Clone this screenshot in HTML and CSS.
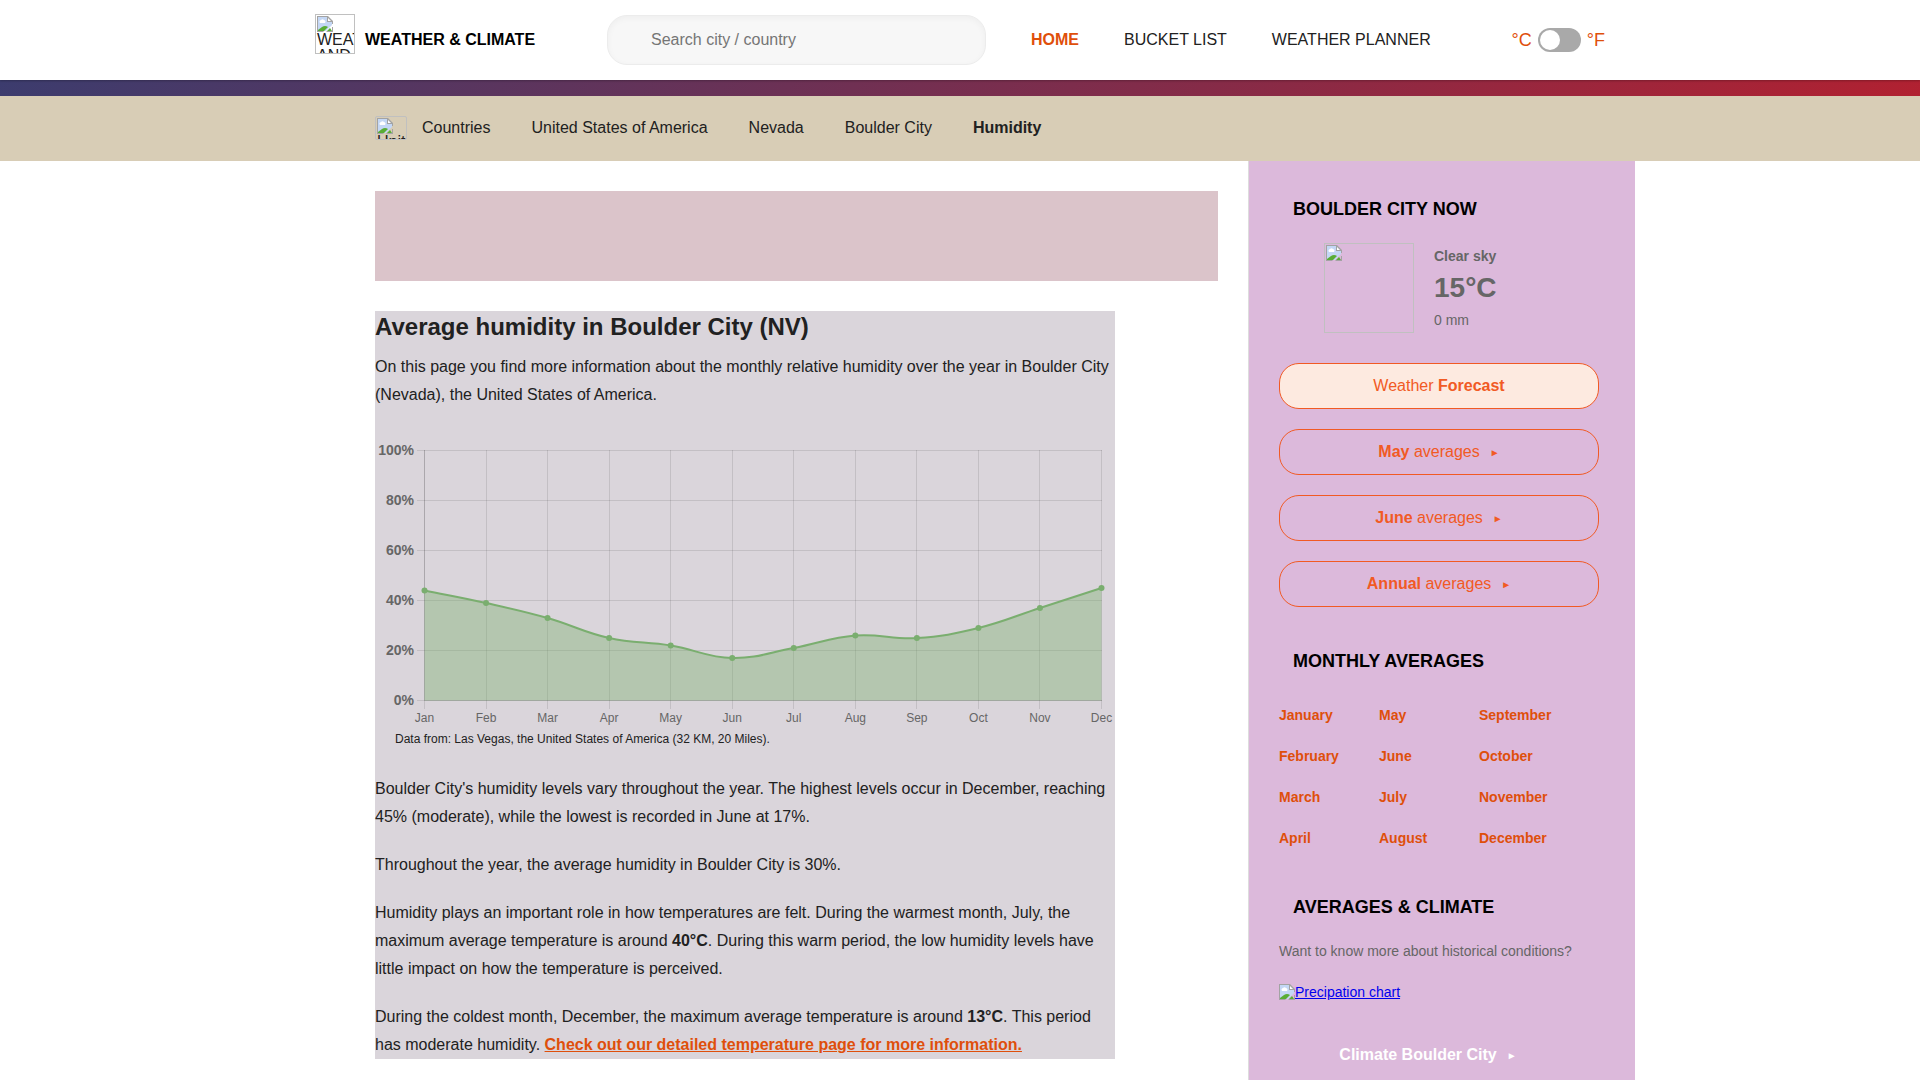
FILE: index.html
```html
<!DOCTYPE html>
<html lang="en">
<head>
<meta charset="utf-8">
<title>Average humidity in Boulder City (NV)</title>
<link rel="stylesheet" href="styles.css">
</head>
<body>
<svg class="defs" aria-hidden="true">
  <symbol id="missing" viewBox="0 0 16 16">
    <path fill="#c4d7f5" d="M1 1h9l5 5v3l-6 6H1z"/>
    <path fill="#fff" d="M3 7a2 2 0 0 1 1-3 2 2 0 0 1 3 0 2 2 0 0 1 1 3z"/>
    <path fill="#59ad35" d="M1 15v-1l4-3q3-2 6 0l-4 4z"/>
    <path fill="#a3a3a3" d="M0 0h11l5 5v3h-1V6h-5V1H1v14h6l-1 1H0z"/>
    <path fill="#fff" d="M11 2l3 3h-3z"/>
    <path fill="#59ad35" d="M13 12l2 3h-5z"/>
    <path fill="#a3a3a3" d="M15 11h1v5H9l1-1h5z"/>
  </symbol>
</svg>

<header class="site-header">
  <div class="header-inner">
    <a class="brand" href="#">
      <span class="missing logo"><svg class="missing-icon"><use href="#missing"/></svg>WEATHER AND CLIMATE</span>
      <span class="brand-name">WEATHER &amp; CLIMATE</span>
    </a>
    <input class="search" type="text" placeholder="Search city / country" aria-label="Search city / country">
    <nav class="main-nav">
      <a class="current" href="#">HOME</a>
      <a href="#">BUCKET LIST</a>
      <a href="#">WEATHER PLANNER</a>
    </nav>
    <label class="units">
      <span>°C</span>
      <input class="switch" type="checkbox" aria-label="Show temperatures in Fahrenheit">
      <span>°F</span>
    </label>
  </div>
</header>
<div class="stripe"></div>

<nav class="crumb-bar">
  <div class="crumbs">
    <span class="missing flag"><svg class="missing-icon"><use href="#missing"/></svg>United States of America</span>
    <a href="#">Countries</a>
    <a href="#">United States of America</a>
    <a href="#">Nevada</a>
    <a href="#">Boulder City</a>
    <strong>Humidity</strong>
  </div>
</nav>

<div class="page">
  <main class="content">
    <div class="banner"></div>
    <article class="article">
      <h1>Average humidity in Boulder City (NV)</h1>
      <p>On this page you find more information about the monthly relative humidity over the year in Boulder City (Nevada), the United States of America.</p>
      <svg class="chart" viewBox="0 0 740 294" role="img" aria-label="Monthly relative humidity" id="chart"></svg>
      <p class="source">Data from: Las Vegas, the United States of America (32 KM, 20 Miles).</p>
      <p>Boulder City's humidity levels vary throughout the year. The highest levels occur in December, reaching 45% (moderate), while the lowest is recorded in June at 17%.</p>
      <p>Throughout the year, the average humidity in Boulder City is 30%.</p>
      <p>Humidity plays an important role in how temperatures are felt. During the warmest month, July, the maximum average temperature is around <strong>40°C</strong>. During this warm period, the low humidity levels have little impact on how the temperature is perceived.</p>
      <p>During the coldest month, December, the maximum average temperature is around <strong>13°C</strong>. This period has moderate humidity. <a class="more" href="#">Check out our detailed temperature page for more information.</a></p>
    </article>
  </main>

  <aside class="sidebar">
    <h2>BOULDER CITY NOW</h2>
    <div class="now">
      <span class="missing sky"><svg class="missing-icon"><use href="#missing"/></svg></span>
      <div class="now-text">
        <strong>Clear sky</strong>
        <strong class="temp">15°C</strong>
        <span>0 mm</span>
      </div>
    </div>
    <div class="buttons">
      <a class="pill filled" href="#"><span>Weather <b>Forecast</b></span></a>
      <a class="pill" href="#"><span><b>May</b> averages</span><i class="arrow">►</i></a>
      <a class="pill" href="#"><span><b>June</b> averages</span><i class="arrow">►</i></a>
      <a class="pill" href="#"><span><b>Annual</b> averages</span><i class="arrow">►</i></a>
    </div>
    <h2>MONTHLY AVERAGES</h2>
    <div class="months">
      <a href="#">January</a><a href="#">February</a><a href="#">March</a><a href="#">April</a>
      <a href="#">May</a><a href="#">June</a><a href="#">July</a><a href="#">August</a>
      <a href="#">September</a><a href="#">October</a><a href="#">November</a><a href="#">December</a>
    </div>
    <h2>AVERAGES &amp; CLIMATE</h2>
    <p class="question">Want to know more about historical conditions?</p>
    <a class="chart-link" href="#"><svg class="missing-icon"><use href="#missing"/></svg><span>Precipation chart</span></a>
    <a class="pill plain" href="#"><b>Climate Boulder City</b><i class="arrow">►</i></a>
  </aside>
</div>
<script src="chart.js"></script>
</body>
</html>
```
FILE: styles.css
```css
* { box-sizing: border-box; }
body {
  margin: 0;
  font: 16px/28px "Liberation Sans", Arial, sans-serif;
  color: #212121;
  background: #fff;
}
a { color: inherit; text-decoration: none; }
h1, h2, p { margin: 0; }
.defs { display: none; }

/* Placeholder box of an image that has not loaded */
.missing {
  display: block;
  flex: none;
  overflow: hidden;
  padding: 1px;
  border: 1px solid #c0c0c0;
  line-height: 16px;
}
.missing-icon { display: block; flex: none; width: 16px; height: 16px; }

.site-header {
  position: relative;
  background: #fff;
  box-shadow: 0 1px 2px rgba(0, 0, 0, .25);
}
.header-inner {
  display: flex;
  align-items: center;
  max-width: 1290px;
  height: 80px;
  margin: 0 auto;
}
.brand {
  display: flex;
  align-items: center;
  gap: 10px;
  width: 292px;
  color: #000;
  font-weight: bold;
}
.logo {
  width: 40px;
  height: 40px;
  margin-bottom: 12px;
  color: #212121;
  font-weight: normal;
}
.search {
  width: 379px;
  height: 50px;
  padding: 0 43px;
  border: 1px solid #ececec;
  border-radius: 20px;
  background: #f7f7f7;
  box-shadow: inset 0 2px 6px rgba(0, 0, 0, .04);
  font: inherit;
}
.search::placeholder { color: #757575; }
.main-nav { display: flex; gap: 45px; margin-left: 45px; }
.current { color: #df4f0b; font-weight: bold; }
.units {
  display: flex;
  align-items: center;
  gap: 6px;
  margin-left: auto;
  color: #df4f0b;
  font-size: 18px;
}
.switch {
  appearance: none;
  width: 43px;
  height: 24px;
  margin: 0;
  padding: 2px;
  border-radius: 12px;
  background: #a9a9a9;
}
.switch::before {
  content: "";
  display: block;
  width: 20px;
  height: 20px;
  border-radius: 50%;
  background: #fff;
}

.stripe { height: 16px; background: linear-gradient(135deg, #3c3c6e, #b12131); }

.crumb-bar { background: #d8cdb6; }
.crumbs {
  display: flex;
  align-items: center;
  gap: 41px;
  max-width: 1350px;
  height: 65px;
  margin: 0 auto;
  padding: 0 90px 2px;
}
.flag {
  width: 32px;
  height: 24px;
  margin-right: -26px;
  border-radius: 2px;
}

.page { display: flex; max-width: 1350px; margin: 0 auto; }
.content { flex: 1; min-width: 0; padding: 30px 30px 21px 90px; }
.banner { height: 90px; margin-bottom: 30px; background: #dbc4ca; }
.article { max-width: 740px; background: #dad5db; }
h1 { font-size: 24px; line-height: 32px; margin-bottom: 10px; }
.article p + p { margin-top: 20px; }
.chart { display: block; width: 100%; margin-top: 22px; overflow: visible; }
.article .source { margin: 0 0 22px; padding: 0 20px; font-size: 12px; }
.more { color: #df4f0b; font-weight: bold; text-decoration: underline; }

.grid-line { stroke: #000; stroke-opacity: .1; }
.axis-line { fill: none; stroke: #000; stroke-opacity: .12; }
.area { fill: #7aae6f; fill-opacity: .4; }
.curve { fill: none; stroke: #7aae6f; stroke-width: 2; }
.dot { fill: #7aae6f; }
.tick { fill: #666; font-size: 12px; text-anchor: middle; }
.percent { fill: #666; font-size: 14px; font-weight: bold; text-anchor: end; }

.sidebar {
  width: 387px;
  padding: 30px 36px 12px 30px;
  border-left: 1px solid #ddd;
  background: #dcb9db;
  color: #666;
  font-size: 14px;
}
h2 { padding: 4px 14px; color: #000; font-size: 18px; line-height: 28px; }
.now { display: flex; gap: 20px; margin: 16px 0 30px; padding-left: 45px; }
.sky { width: 90px; height: 90px; }
.now-text { display: flex; flex-direction: column; line-height: 26px; }
.now-text .temp { font-size: 28px; line-height: 38px; }
.buttons { display: grid; gap: 20px; margin-bottom: 36px; }
.pill {
  display: flex;
  justify-content: center;
  gap: 10px;
  height: 46px;
  padding: 8px;
  border: 1px solid #f15a24;
  border-radius: 20px;
  color: #f15a24;
  font-size: 16px;
}
.filled { background: #fdeae0; }
.arrow { padding-top: 1px; font-size: 10px; font-style: normal; }
.months {
  display: grid;
  grid-template-rows: repeat(4, 41px);
  grid-auto-columns: 100px;
  grid-auto-flow: column;
  margin: 16px 0 30px;
  color: #df4f0b;
  font-weight: bold;
  line-height: 41px;
}
.question { margin-top: 12px; }
.chart-link {
  display: flex;
  align-items: center;
  margin: 13px 0 26px;
  color: #00e;
  text-decoration: underline;
}
.plain { max-width: 298px; border-color: transparent; color: #fff; }
```
FILE: chart.js
```js
const months = ["Jan", "Feb", "Mar", "Apr", "May", "Jun", "Jul", "Aug", "Sep", "Oct", "Nov", "Dec"];
const humidity = [44, 39, 33, 25, 22, 17, 21, 26, 25, 29, 37, 45];
const left = 49.5, right = 726.5, top0 = 19.5, bottom = 269.5;
const x = i => left + (right - left) * i / 11;
const y = v => bottom - (bottom - top0) * v / 100;
const pts = humidity.map((v, i) => [x(i), y(v)]);

// Control points follow the neighbours' slope, scaled by the segment lengths.
const tension = 0.4;
const controls = pts.map((p, i) => {
  const a = pts[i - 1] || p, b = pts[i + 1] || p;
  const d1 = Math.hypot(p[0] - a[0], p[1] - a[1]);
  const d2 = Math.hypot(b[0] - p[0], b[1] - p[1]);
  const f1 = tension * d1 / (d1 + d2), f2 = tension * d2 / (d1 + d2);
  return [
    [p[0] - f1 * (b[0] - a[0]), p[1] - f1 * (b[1] - a[1])],
    [p[0] + f2 * (b[0] - a[0]), p[1] + f2 * (b[1] - a[1])]
  ];
});
let curve = `M${pts[0]}`;
for (let i = 1; i < pts.length; i++) {
  curve += `C${controls[i - 1][1]} ${controls[i][0]} ${pts[i]}`;
}

let out = "";
for (let v = 0; v <= 100; v += 20) {
  out += `<path class="grid-line" d="M42 ${y(v)}H727"/>`;
  out += `<text class="percent" x="39" y="${y(v) + 4}">${v}%</text>`;
}
months.forEach((m, i) => {
  const gx = Math.round(x(i) - 0.5) + 0.5;
  out += `<path class="grid-line" d="M${gx} 19V278"/>`;
  out += `<text class="tick" x="${x(i)}" y="291">${m}</text>`;
});
out += `<path class="axis-line" d="M${left} 19V269.5H727"/>`;
out += `<path class="area" d="${curve}V${bottom}H${left}Z"/><path class="curve" d="${curve}"/>`;
pts.forEach(p => { out += `<circle class="dot" cx="${p[0]}" cy="${p[1]}" r="3"/>`; });
document.getElementById("chart").innerHTML = out;
```
